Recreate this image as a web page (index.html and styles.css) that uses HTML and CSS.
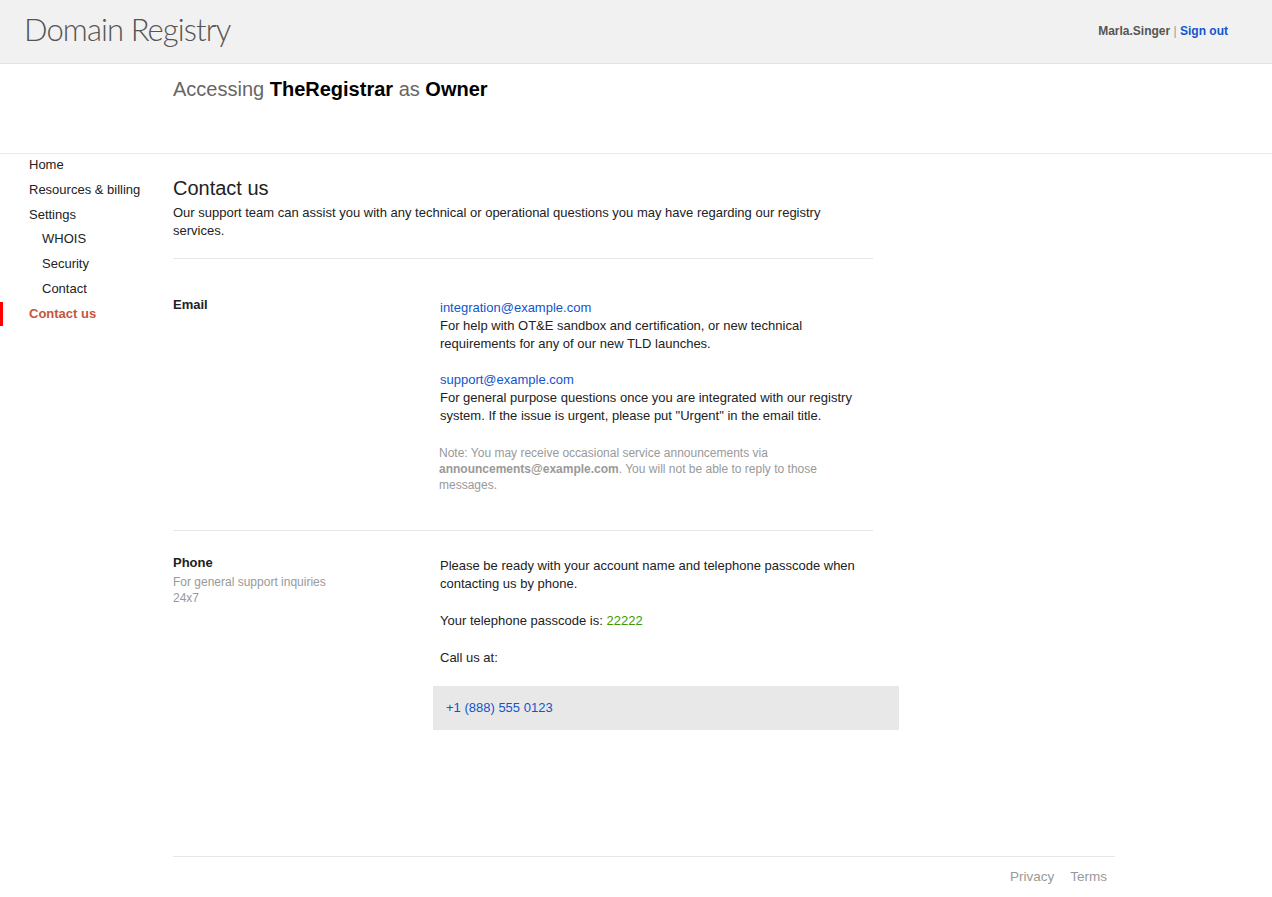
FILE: index.html
```html
<!DOCTYPE html>
<html>
<head>
<meta charset="utf-8">
<title>Domain Registry</title>
<link rel="stylesheet" href="styles.css">
</head>
<body>
<header class="header">
  <div class="logo">Domain Registry</div>
  <div class="user"><span class="user-name">Marla.Singer</span> <span class="sep">|</span> <a class="signout" href="#">Sign out</a></div>
</header>
<div class="context">
  <div class="context-text">Accessing <b>TheRegistrar</b> as <b>Owner</b></div>
</div>
<div class="layout">
  <nav class="nav">
    <a class="nav-item" href="#">Home</a>
    <a class="nav-item" href="#">Resources &amp; billing</a>
    <a class="nav-item" href="#">Settings</a>
    <a class="nav-item sub" href="#">WHOIS</a>
    <a class="nav-item sub" href="#">Security</a>
    <a class="nav-item sub" href="#">Contact</a>
    <a class="nav-item active" href="#">Contact us</a>
  </nav>
  <main class="main">
    <div class="content">
      <h1 class="title">Contact us</h1>
      <p class="intro">Our support team can assist you with any technical or operational questions you may have regarding our registry services.</p>
      <section class="section email">
        <div class="label"><div class="label-title">Email</div></div>
        <div class="body">
          <a class="link" href="#">integration@example.com</a>
          <p class="para">For help with OT&amp;E sandbox and certification, or new technical requirements for any of our new TLD launches.</p>
          <a class="link gap" href="#">support@example.com</a>
          <p class="para">For general purpose questions once you are integrated with our registry system. If the issue is urgent, please put "Urgent" in the email title.</p>
          <p class="note">Note: You may receive occasional service announcements via <b>announcements@example.com</b>. You will not be able to reply to those messages.</p>
        </div>
      </section>
      <section class="section phone">
        <div class="label">
          <div class="label-title">Phone</div>
          <div class="label-sub">For general support inquiries<br>24x7</div>
        </div>
        <div class="body">
          <p class="para">Please be ready with your account name and telephone passcode when contacting us by phone.</p>
          <p class="para spaced">Your telephone passcode is: <span class="passcode">22222</span></p>
          <p class="para spaced">Call us at:</p>
          <div class="phone-box"><a class="link" href="#">+1 (888) 555 0123</a></div>
        </div>
      </section>
    </div>
    <footer class="footer">
      <a href="#">Privacy</a>
      <a href="#">Terms</a>
    </footer>
  </main>
</div>
</body>
</html>
```

FILE: styles.css
```css
* { box-sizing: border-box; }
html, body { margin: 0; padding: 0; }
body {
  font-family: "Liberation Sans", Arial, sans-serif;
  font-size: 13px;
  color: #222;
  background: #fff;
}
a { text-decoration: none; }

.header {
  height: 64px;
  background: #f1f1f1;
  border-bottom: 1px solid #e2e2e2;
  display: flex;
  align-items: center;
  justify-content: space-between;
  padding: 0 44px 0 24px;
}
.logo {
  font-family: Lato, "Open Sans", sans-serif;
  font-weight: 300;
  font-size: 31px;
  color: #555;
  letter-spacing: -0.9px;
  margin-top: -6px;
}
.user {
  font-size: 12px;
  font-weight: bold;
  color: #555;
  margin-top: -1px;
}
.user .sep { font-weight: normal; color: #999; }
.signout { color: #1155cc; }

.context {
  height: 90px;
  border-bottom: 1px solid #ebebeb;
  padding: 13px 0 0 173px;
}
.context-text {
  font-size: 20px;
  color: #666;
  line-height: 24px;
}
.context-text b { color: #000; }

.layout {
  display: flex;
}
.nav {
  width: 173px;
  flex-shrink: 0;
  display: flex;
  flex-direction: column;
  padding-top: 1px;
}
.nav-item {
  display: block;
  color: #222;
  font-size: 13px;
  line-height: 20px;
  padding: 0 0 5px 29px;
  height: 24.8px;
  border-left: 3px solid transparent;
  margin-left: -3px;
}
.nav-item.sub { padding-left: 42px; }
.nav-item.active {
  color: #c5553b;
  font-weight: bold;
  border-left-color: #ff0000;
  margin-left: 0;
  padding-left: 26px;
  padding-top: 2px;
  height: 24px;
  margin-top: -2px;
}

.main {
  width: 942px;
  display: flex;
  flex-direction: column;
}
.content {
  width: 700px;
  padding-top: 23px;
}
.title {
  font-size: 20px;
  font-weight: normal;
  margin: 0;
  line-height: 22px;
  color: #222;
}
.intro {
  margin: 5px 0 0 0;
  line-height: 18px;
  padding-bottom: 18px;
  border-bottom: 1px solid #e6e6e6;
}

.section {
  display: flex;
  border-bottom: 1px solid #e6e6e6;
}
.section.email { padding: 38px 0 37px 0; }
.section.phone { padding: 24px 0 0 0; border-bottom: none; }
.label { width: 267px; flex-shrink: 0; }
.label-title { font-weight: bold; line-height: 16px; font-size: 13px; color: #222; }
.label-sub { color: #999; font-size: 12px; line-height: 16px; margin-top: 3px; }
.body { flex: 1; padding-top: 2px; }
.phone .body { padding-top: 2px; }
.link { color: #1155cc; display: block; line-height: 18px; }
.link.gap { margin-top: 18px; }
.para { margin: 0; line-height: 18px; }
.para.spaced { margin-top: 19px; }
.note {
  margin: 20px 0 0 -1px;
  font-size: 12px;
  line-height: 16px;
  color: #999;
}
.passcode { color: #3c9a00; }

.phone-box {
  background: #e8e8e8;
  margin: 19px -26px 0 -7px;
  height: 44px;
  padding: 13px 13px;
}
.phone-box .link { line-height: 18px; }

.footer {
  margin-top: 126px;
  border-top: 1px solid #e6e6e6;
  display: flex;
  justify-content: flex-end;
  gap: 16px;
  padding: 12px 8px 0 0;
  font-size: 13.5px;
}
.footer a { color: #999; }
```
